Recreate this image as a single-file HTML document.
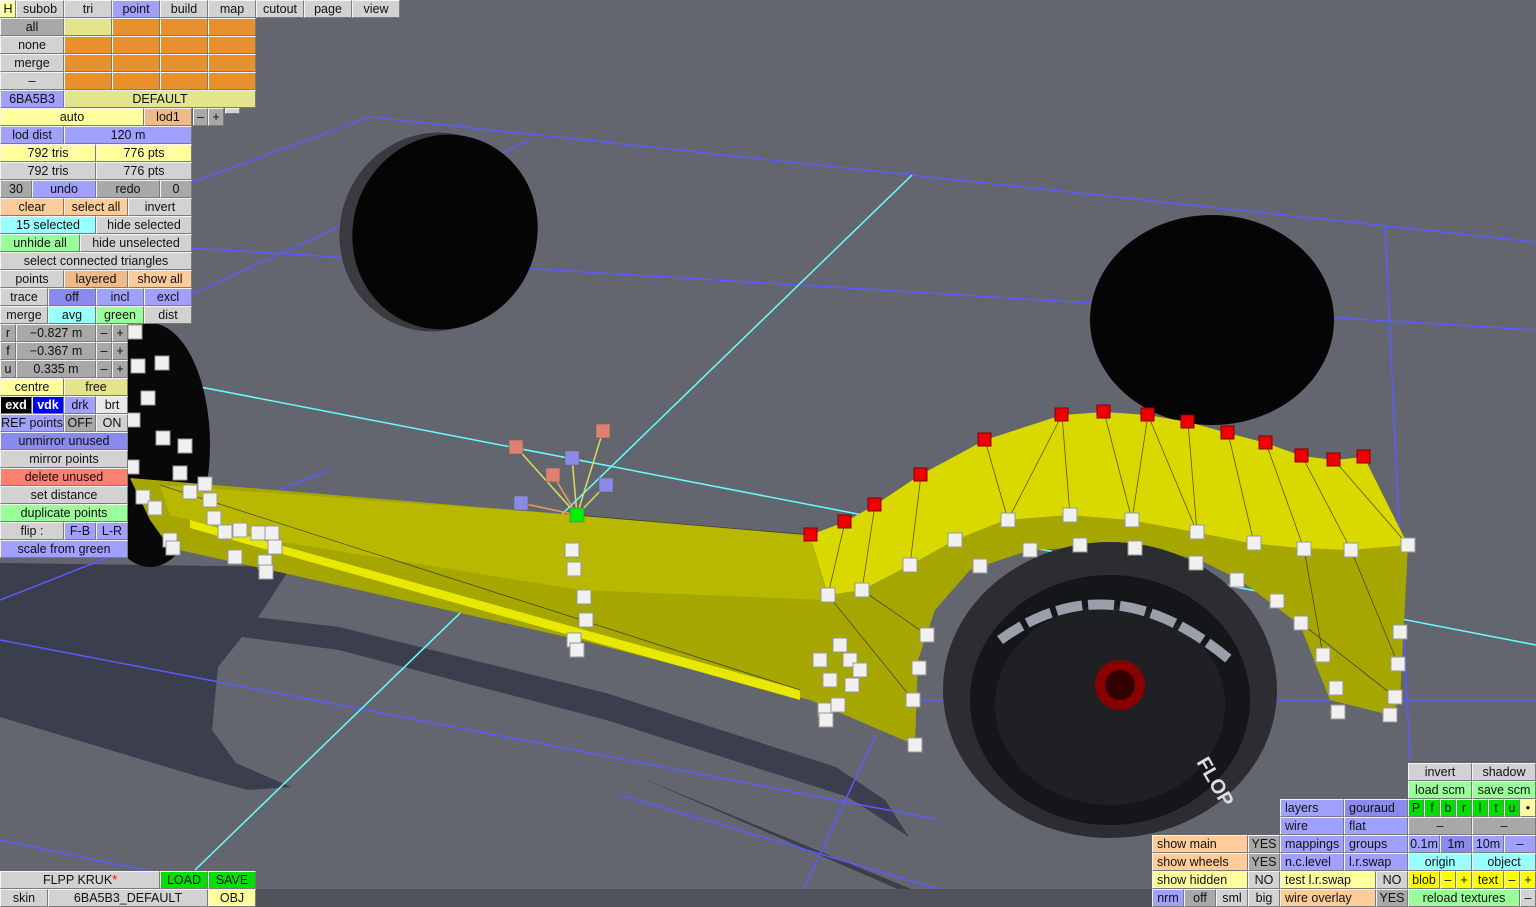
<!DOCTYPE html>
<html><head><meta charset="utf-8"><style>
*{margin:0;padding:0;box-sizing:border-box}
body{width:1536px;height:907px;overflow:hidden;background:#63666e;position:relative;font-family:"Liberation Sans","DejaVu Sans",sans-serif}
svg{position:absolute;left:0;top:0}
.b{position:absolute;height:18px;font-size:12.5px;line-height:16px;text-align:center;color:#111;white-space:nowrap;overflow:hidden;border:1px solid;border-color:#f4f4f4 #7a7a7a #7a7a7a #f4f4f4;background:#d2d2d2}
.g{background:#d2d2d2}.dg{background:#a8a8a8}.bl{background:#a0a0ff}.bd{background:#8a8aee}.y{background:#ffff9e}.yo{background:#e4e48c}
.o{background:#e8902e}.pe{background:#ffcc99}.pd{background:#eebb88}.c{background:#99ffff}.gr{background:#99ff99}.G{background:#00e000}
.r{background:#ff8070}.k{background:#000;color:#fff;font-weight:bold}.v{background:#0000ff;color:#fff;font-weight:bold}.w{background:#e8e8e8}.Y{background:#ffff00}
</style></head><body>
<svg width="1536" height="907" viewBox="0 0 1536 907">
<!-- shadow -->
<polygon points="0,563 291,567 261,613 218,667 212,730 236,763 291,787 248,790 200,777 0,717" fill="#3b3e4c"/>
<polygon points="255,617 339,627 606,693 836,767 885,800 909,837 848,797 606,720 339,650 242,637" fill="#3b3e4c"/>
<polygon points="630,773 945,903 930,903" fill="#3b3e4c"/>
<!-- grid -->
<g stroke="#5a5aff" stroke-width="1.5" fill="none">
<line x1="190" y1="183" x2="370" y2="117"/><line x1="370" y1="117" x2="1536" y2="242"/>
<line x1="190" y1="248" x2="1536" y2="330"/>
<line x1="190" y1="295" x2="530" y2="140"/>
<line x1="1385" y1="225" x2="1410" y2="760"/>
<line x1="0" y1="600" x2="330" y2="470"/>
<line x1="0" y1="640" x2="940" y2="820"/>
<line x1="0" y1="840" x2="320" y2="907"/>
<line x1="850" y1="700" x2="1536" y2="700"/>
<line x1="876" y1="735" x2="795" y2="907"/>
<line x1="620" y1="795" x2="1000" y2="907"/>
</g>
<g stroke="#66ffff" stroke-width="1.5"><line x1="912" y1="175" x2="195" y2="870"/><line x1="190" y1="385" x2="1536" y2="645"/></g>
<!-- tyres -->
<ellipse cx="435" cy="232" rx="95" ry="100" transform="rotate(20 435 232)" fill="#3a3b40"/>
<ellipse cx="445" cy="232" rx="92" ry="98" transform="rotate(20 445 232)" fill="#050505"/>
<ellipse cx="1212" cy="320" rx="122" ry="105" fill="#050505"/>
<ellipse cx="150" cy="445" rx="60" ry="122" fill="#080808"/>
<!-- body -->
<polygon points="130,478 575,515 810,535 950,520 1100,510 1250,500 1408,545 1400,700 1390,715 1330,700 1300,625 1240,580 1200,560 1130,545 1030,550 970,570 935,610 918,660 915,745 810,700 580,640 270,570 170,548 150,520" fill="#a6a600"/>
<polygon points="160,485 575,515 810,535 828,600 580,590 270,540 170,515" fill="#b8b800"/>
<polygon points="190,520 800,690 800,700 190,528" fill="#e8e800"/>
<polygon points="810,535 845,522 875,505 920,475 985,440 1062,415 1104,412 1148,415 1188,422 1228,433 1266,443 1302,456 1334,460 1364,457 1408,545 1350,550 1300,548 1250,543 1200,533 1130,520 1070,515 1005,520 955,540 910,565 862,590 828,595" fill="#d9d900"/>
<g stroke="#222" stroke-width="0.8" opacity="0.7">
<line x1="985" y1="440" x2="1008" y2="520"/><line x1="1062" y1="415" x2="1070" y2="515"/><line x1="1104" y1="412" x2="1132" y2="520"/><line x1="1148" y1="415" x2="1132" y2="520"/><line x1="1188" y1="422" x2="1197" y2="532"/><line x1="1228" y1="433" x2="1254" y2="543"/><line x1="1266" y1="443" x2="1304" y2="549"/><line x1="1302" y1="456" x2="1351" y2="550"/><line x1="1334" y1="460" x2="1408" y2="545"/><line x1="921" y1="475" x2="910" y2="565"/><line x1="875" y1="505" x2="862" y2="590"/><line x1="845" y1="522" x2="828" y2="595"/><line x1="1062" y1="415" x2="1008" y2="520"/><line x1="1148" y1="415" x2="1197" y2="532"/>
<line x1="1304" y1="549" x2="1323" y2="655"/><line x1="1351" y1="550" x2="1398" y2="664"/><line x1="1301" y1="623" x2="1395" y2="697"/><line x1="862" y1="590" x2="927" y2="635"/><line x1="828" y1="595" x2="913" y2="700"/><line x1="160" y1="485" x2="800" y2="690"/><line x1="575" y1="515" x2="810" y2="535"/>
</g>
<!-- wheel -->
<ellipse cx="1110" cy="690" rx="167" ry="148" fill="#2c2d31"/>
<ellipse cx="1110" cy="700" rx="140" ry="125" fill="#15161a"/>
<ellipse cx="1110" cy="705" rx="115" ry="100" fill="#1f2024"/>
<path d="M1000,640 Q1110,560 1230,660" stroke="#9aa0aa" stroke-width="10" fill="none" stroke-dasharray="26 6"/>
<circle cx="1120" cy="685" r="25" fill="#8a0000"/><circle cx="1120" cy="685" r="15" fill="#300"/>
<text x="1180" y="770" fill="#ddd" font-size="20" font-weight="bold" font-family="Liberation Sans" transform="rotate(60 1195 780)">FLOP</text>
<!-- gizmo -->
<g stroke-width="1.5"><line x1="577" y1="515" x2="516" y2="447" stroke="#dddd55"/><line x1="577" y1="515" x2="572" y2="458" stroke="#dddd55"/><line x1="577" y1="515" x2="603" y2="431" stroke="#dddd55"/><line x1="577" y1="515" x2="606" y2="485" stroke="#dddd55"/><line x1="577" y1="515" x2="553" y2="475" stroke="#ee9955"/><line x1="577" y1="515" x2="521" y2="503" stroke="#ee9955"/></g>
<g stroke="#666" stroke-width="0.6">
<rect x="509" y="440" width="14" height="14" fill="#e08070"/><rect x="596" y="424" width="14" height="14" fill="#e08070"/><rect x="546" y="468" width="14" height="14" fill="#e08070"/>
<rect x="565" y="451" width="14" height="14" fill="#8a8ae8"/><rect x="599" y="478" width="14" height="14" fill="#8a8ae8"/><rect x="514" y="496" width="14" height="14" fill="#8a8ae8"/>
<rect x="570" y="508" width="14" height="14" fill="#00ee00"/>
</g>
<g fill="#ee0000" stroke="#800">
<rect x="804" y="528" width="13" height="13"/><rect x="838" y="515" width="13" height="13"/><rect x="868" y="498" width="13" height="13"/><rect x="914" y="468" width="13" height="13"/><rect x="978" y="433" width="13" height="13"/><rect x="1055" y="408" width="13" height="13"/><rect x="1097" y="405" width="13" height="13"/><rect x="1141" y="408" width="13" height="13"/><rect x="1181" y="415" width="13" height="13"/><rect x="1221" y="426" width="13" height="13"/><rect x="1259" y="436" width="13" height="13"/><rect x="1295" y="449" width="13" height="13"/><rect x="1327" y="453" width="13" height="13"/><rect x="1357" y="450" width="13" height="13"/>
</g>
<g fill="#f0f0f0" stroke="#999">
<rect x="1001" y="513" width="14" height="14"/><rect x="1063" y="508" width="14" height="14"/><rect x="1125" y="513" width="14" height="14"/><rect x="1190" y="525" width="14" height="14"/><rect x="1247" y="536" width="14" height="14"/><rect x="1297" y="542" width="14" height="14"/><rect x="1344" y="543" width="14" height="14"/><rect x="1401" y="538" width="14" height="14"/><rect x="948" y="533" width="14" height="14"/><rect x="903" y="558" width="14" height="14"/><rect x="855" y="583" width="14" height="14"/><rect x="821" y="588" width="14" height="14"/><rect x="1023" y="543" width="14" height="14"/><rect x="973" y="559" width="14" height="14"/><rect x="1073" y="538" width="14" height="14"/><rect x="1128" y="541" width="14" height="14"/><rect x="1189" y="556" width="14" height="14"/><rect x="1230" y="573" width="14" height="14"/><rect x="1270" y="594" width="14" height="14"/><rect x="1294" y="616" width="14" height="14"/><rect x="1316" y="648" width="14" height="14"/><rect x="1329" y="681" width="14" height="14"/><rect x="1331" y="705" width="14" height="14"/><rect x="1388" y="690" width="14" height="14"/><rect x="1391" y="657" width="14" height="14"/><rect x="1393" y="625" width="14" height="14"/><rect x="1383" y="708" width="14" height="14"/><rect x="920" y="628" width="14" height="14"/><rect x="912" y="661" width="14" height="14"/><rect x="906" y="693" width="14" height="14"/><rect x="908" y="738" width="14" height="14"/><rect x="833" y="638" width="14" height="14"/><rect x="843" y="653" width="14" height="14"/><rect x="813" y="653" width="14" height="14"/><rect x="823" y="673" width="14" height="14"/><rect x="818" y="703" width="14" height="14"/><rect x="831" y="698" width="14" height="14"/><rect x="819" y="713" width="14" height="14"/><rect x="853" y="663" width="14" height="14"/><rect x="845" y="678" width="14" height="14"/>
<rect x="565" y="543" width="14" height="14"/><rect x="567" y="562" width="14" height="14"/><rect x="577" y="590" width="14" height="14"/><rect x="579" y="613" width="14" height="14"/><rect x="567" y="633" width="14" height="14"/><rect x="570" y="643" width="14" height="14"/>
<rect x="155" y="356" width="14" height="14"/><rect x="131" y="359" width="14" height="14"/><rect x="141" y="391" width="14" height="14"/><rect x="156" y="431" width="14" height="14"/><rect x="178" y="439" width="14" height="14"/><rect x="173" y="466" width="14" height="14"/><rect x="198" y="477" width="14" height="14"/><rect x="136" y="490" width="14" height="14"/><rect x="148" y="501" width="14" height="14"/><rect x="183" y="485" width="14" height="14"/><rect x="203" y="493" width="14" height="14"/><rect x="207" y="511" width="14" height="14"/><rect x="218" y="525" width="14" height="14"/><rect x="233" y="523" width="14" height="14"/><rect x="251" y="526" width="14" height="14"/><rect x="265" y="526" width="14" height="14"/><rect x="268" y="540" width="14" height="14"/><rect x="163" y="533" width="14" height="14"/><rect x="166" y="541" width="14" height="14"/><rect x="228" y="550" width="14" height="14"/><rect x="258" y="555" width="14" height="14"/><rect x="259" y="565" width="14" height="14"/><rect x="128" y="325" width="14" height="14"/><rect x="126" y="413" width="14" height="14"/><rect x="125" y="460" width="14" height="14"/>
</g>
<rect x="0" y="889" width="1536" height="18" fill="#505259"/>
</svg>

<!-- top-left -->
<div class="b y" style="left:0;top:0;width:16px">H</div>
<div class="b g" style="left:16px;top:0;width:48px">subob</div>
<div class="b g" style="left:64px;top:0;width:48px">tri</div>
<div class="b bl" style="left:112px;top:0;width:48px">point</div>
<div class="b g" style="left:160px;top:0;width:48px">build</div>
<div class="b g" style="left:208px;top:0;width:48px">map</div>
<div class="b g" style="left:256px;top:0;width:48px">cutout</div>
<div class="b g" style="left:304px;top:0;width:48px">page</div>
<div class="b g" style="left:352px;top:0;width:48px">view</div>

<div class="b dg" style="left:0;top:18px;width:64px">all</div>
<div class="b yo" style="left:64px;top:18px;width:48px"></div>
<div class="b o" style="left:112px;top:18px;width:48px"></div><div class="b o" style="left:160px;top:18px;width:48px"></div><div class="b o" style="left:208px;top:18px;width:48px"></div>
<div class="b g" style="left:0;top:36px;width:64px">none</div>
<div class="b o" style="left:64px;top:36px;width:48px"></div><div class="b o" style="left:112px;top:36px;width:48px"></div><div class="b o" style="left:160px;top:36px;width:48px"></div><div class="b o" style="left:208px;top:36px;width:48px"></div>
<div class="b g" style="left:0;top:54px;width:64px">merge</div>
<div class="b o" style="left:64px;top:54px;width:48px"></div><div class="b o" style="left:112px;top:54px;width:48px"></div><div class="b o" style="left:160px;top:54px;width:48px"></div><div class="b o" style="left:208px;top:54px;width:48px"></div>
<div class="b g" style="left:0;top:72px;width:64px">–</div>
<div class="b o" style="left:64px;top:72px;width:48px"></div><div class="b o" style="left:112px;top:72px;width:48px"></div><div class="b o" style="left:160px;top:72px;width:48px"></div><div class="b o" style="left:208px;top:72px;width:48px"></div>
<div class="b bl" style="left:0;top:90px;width:64px">6BA5B3</div>
<div class="b yo" style="left:64px;top:90px;width:192px">DEFAULT</div>

<div class="b y" style="left:0;top:108px;width:144px">auto</div>
<div class="b pd" style="left:144px;top:108px;width:48px">lod1</div>
<div class="b dg" style="left:193px;top:108px;width:15px">–</div>
<div class="b dg" style="left:208px;top:108px;width:16px">+</div>
<div class="b g" style="left:225px;top:108px;width:15px;height:6px"></div>
<div class="b bl" style="left:0;top:126px;width:64px">lod dist</div>
<div class="b bl" style="left:64px;top:126px;width:128px">120 m</div>
<div class="b y" style="left:0;top:144px;width:96px">792 tris</div>
<div class="b y" style="left:96px;top:144px;width:96px">776 pts</div>
<div class="b g" style="left:0;top:162px;width:96px">792 tris</div>
<div class="b g" style="left:96px;top:162px;width:96px">776 pts</div>
<div class="b dg" style="left:0;top:180px;width:32px">30</div>
<div class="b bl" style="left:32px;top:180px;width:64px">undo</div>
<div class="b dg" style="left:96px;top:180px;width:64px">redo</div>
<div class="b dg" style="left:160px;top:180px;width:32px">0</div>
<div class="b pe" style="left:0;top:198px;width:64px">clear</div>
<div class="b pe" style="left:64px;top:198px;width:64px">select all</div>
<div class="b g" style="left:128px;top:198px;width:64px">invert</div>
<div class="b c" style="left:0;top:216px;width:96px">15 selected</div>
<div class="b g" style="left:96px;top:216px;width:96px">hide selected</div>
<div class="b gr" style="left:0;top:234px;width:80px">unhide all</div>
<div class="b g" style="left:80px;top:234px;width:112px">hide unselected</div>
<div class="b g" style="left:0;top:252px;width:192px">select connected triangles</div>
<div class="b g" style="left:0;top:270px;width:64px">points</div>
<div class="b pd" style="left:64px;top:270px;width:64px">layered</div>
<div class="b pe" style="left:128px;top:270px;width:64px">show all</div>
<div class="b g" style="left:0;top:288px;width:48px">trace</div>
<div class="b bd" style="left:48px;top:288px;width:48px">off</div>
<div class="b bl" style="left:96px;top:288px;width:48px">incl</div>
<div class="b bl" style="left:144px;top:288px;width:48px">excl</div>
<div class="b g" style="left:0;top:306px;width:48px">merge</div>
<div class="b c" style="left:48px;top:306px;width:48px">avg</div>
<div class="b gr" style="left:96px;top:306px;width:48px">green</div>
<div class="b g" style="left:144px;top:306px;width:48px">dist</div>
<div class="b dg" style="left:0;top:324px;width:16px">r</div><div class="b dg" style="left:16px;top:324px;width:80px">−0.827 m</div><div class="b dg" style="left:96px;top:324px;width:16px">–</div><div class="b dg" style="left:112px;top:324px;width:16px">+</div>
<div class="b dg" style="left:0;top:342px;width:16px">f</div><div class="b dg" style="left:16px;top:342px;width:80px">−0.367 m</div><div class="b dg" style="left:96px;top:342px;width:16px">–</div><div class="b dg" style="left:112px;top:342px;width:16px">+</div>
<div class="b dg" style="left:0;top:360px;width:16px">u</div><div class="b dg" style="left:16px;top:360px;width:80px">0.335 m</div><div class="b dg" style="left:96px;top:360px;width:16px">–</div><div class="b dg" style="left:112px;top:360px;width:16px">+</div>
<div class="b y" style="left:0;top:378px;width:64px">centre</div>
<div class="b yo" style="left:64px;top:378px;width:64px">free</div>
<div class="b k" style="left:0;top:396px;width:32px">exd</div>
<div class="b v" style="left:32px;top:396px;width:32px">vdk</div>
<div class="b bl" style="left:64px;top:396px;width:32px">drk</div>
<div class="b w" style="left:96px;top:396px;width:32px">brt</div>
<div class="b bl" style="left:0;top:414px;width:64px">REF points</div>
<div class="b dg" style="left:64px;top:414px;width:32px">OFF</div>
<div class="b g" style="left:96px;top:414px;width:32px">ON</div>
<div class="b bd" style="left:0;top:432px;width:128px">unmirror unused</div>
<div class="b g" style="left:0;top:450px;width:128px">mirror points</div>
<div class="b r" style="left:0;top:468px;width:128px">delete unused</div>
<div class="b g" style="left:0;top:486px;width:128px">set distance</div>
<div class="b gr" style="left:0;top:504px;width:128px">duplicate points</div>
<div class="b g" style="left:0;top:522px;width:64px">flip :</div>
<div class="b bl" style="left:64px;top:522px;width:32px">F-B</div>
<div class="b bl" style="left:96px;top:522px;width:32px">L-R</div>
<div class="b bl" style="left:0;top:540px;width:128px">scale from green</div>

<!-- bottom-left -->
<div class="b g" style="left:0;top:871px;width:160px">FLPP KRUK<span style="color:#f00">*</span></div>
<div class="b G" style="left:160px;top:871px;width:48px">LOAD</div>
<div class="b G" style="left:208px;top:871px;width:48px">SAVE</div>
<div class="b g" style="left:0;top:889px;width:48px">skin</div>
<div class="b g" style="left:48px;top:889px;width:160px">6BA5B3_DEFAULT</div>
<div class="b y" style="left:208px;top:889px;width:48px">OBJ</div>

<!-- bottom-right -->
<div class="b g" style="left:1408px;top:763px;width:64px">invert</div>
<div class="b g" style="left:1472px;top:763px;width:64px">shadow</div>
<div class="b gr" style="left:1408px;top:781px;width:64px">load scm</div>
<div class="b gr" style="left:1472px;top:781px;width:64px">save scm</div>
<div class="b bl" style="left:1280px;top:799px;width:64px;text-align:left;padding-left:4px">layers</div>
<div class="b bd" style="left:1344px;top:799px;width:64px;text-align:left;padding-left:4px">gouraud</div>
<div class="b G" style="left:1408px;top:799px;width:16px">P</div><div class="b G" style="left:1424px;top:799px;width:16px">f</div><div class="b G" style="left:1440px;top:799px;width:16px">b</div><div class="b G" style="left:1456px;top:799px;width:16px">r</div><div class="b G" style="left:1472px;top:799px;width:16px">l</div><div class="b G" style="left:1488px;top:799px;width:16px">t</div><div class="b G" style="left:1504px;top:799px;width:16px">u</div><div class="b y" style="left:1520px;top:799px;width:16px">•</div>
<div class="b bl" style="left:1280px;top:817px;width:64px;text-align:left;padding-left:4px">wire</div>
<div class="b bl" style="left:1344px;top:817px;width:64px;text-align:left;padding-left:4px">flat</div>
<div class="b dg" style="left:1408px;top:817px;width:64px">–</div>
<div class="b dg" style="left:1472px;top:817px;width:64px">–</div>
<div class="b pe" style="left:1152px;top:835px;width:96px;text-align:left;padding-left:4px">show main</div>
<div class="b dg" style="left:1248px;top:835px;width:32px">YES</div>
<div class="b bl" style="left:1280px;top:835px;width:64px;text-align:left;padding-left:4px">mappings</div>
<div class="b bl" style="left:1344px;top:835px;width:64px;text-align:left;padding-left:4px">groups</div>
<div class="b bl" style="left:1408px;top:835px;width:32px">0.1m</div>
<div class="b bd" style="left:1440px;top:835px;width:32px">1m</div>
<div class="b bl" style="left:1472px;top:835px;width:32px">10m</div>
<div class="b bl" style="left:1504px;top:835px;width:32px">–</div>
<div class="b pe" style="left:1152px;top:853px;width:96px;text-align:left;padding-left:4px">show wheels</div>
<div class="b dg" style="left:1248px;top:853px;width:32px">YES</div>
<div class="b bl" style="left:1280px;top:853px;width:64px;text-align:left;padding-left:4px">n.c.level</div>
<div class="b bl" style="left:1344px;top:853px;width:64px;text-align:left;padding-left:4px">l.r.swap</div>
<div class="b c" style="left:1408px;top:853px;width:64px">origin</div>
<div class="b c" style="left:1472px;top:853px;width:64px">object</div>
<div class="b y" style="left:1152px;top:871px;width:96px;text-align:left;padding-left:4px">show hidden</div>
<div class="b g" style="left:1248px;top:871px;width:32px">NO</div>
<div class="b y" style="left:1280px;top:871px;width:96px;text-align:left;padding-left:4px">test l.r.swap</div>
<div class="b g" style="left:1376px;top:871px;width:32px">NO</div>
<div class="b Y" style="left:1408px;top:871px;width:32px">blob</div>
<div class="b Y" style="left:1440px;top:871px;width:16px">–</div>
<div class="b Y" style="left:1456px;top:871px;width:16px">+</div>
<div class="b Y" style="left:1472px;top:871px;width:32px">text</div>
<div class="b Y" style="left:1504px;top:871px;width:16px">–</div>
<div class="b Y" style="left:1520px;top:871px;width:16px">+</div>
<div class="b bl" style="left:1152px;top:889px;width:32px">nrm</div>
<div class="b dg" style="left:1184px;top:889px;width:32px">off</div>
<div class="b g" style="left:1216px;top:889px;width:32px">sml</div>
<div class="b g" style="left:1248px;top:889px;width:32px">big</div>
<div class="b pe" style="left:1280px;top:889px;width:96px;text-align:left;padding-left:4px">wire overlay</div>
<div class="b dg" style="left:1376px;top:889px;width:32px">YES</div>
<div class="b gr" style="left:1408px;top:889px;width:112px">reload textures</div>
<div class="b g" style="left:1520px;top:889px;width:16px">–</div>
</body></html>
